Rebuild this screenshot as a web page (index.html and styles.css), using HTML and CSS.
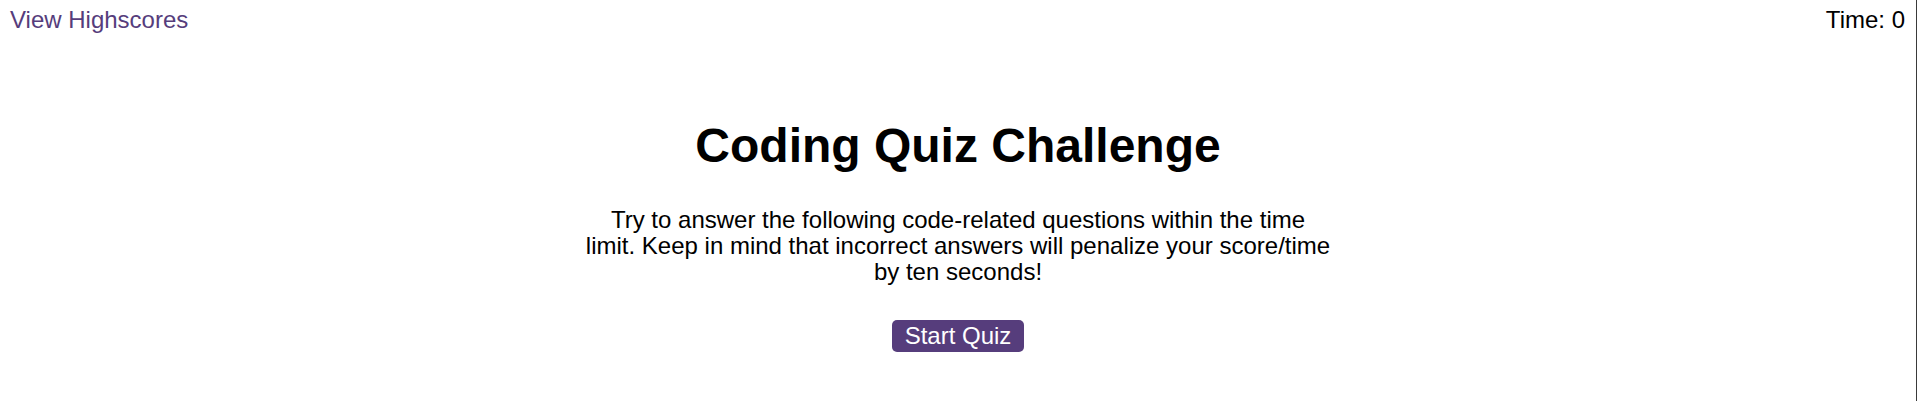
FILE: index.html
```html
<!DOCTYPE html>
<html lang="en">
<head>
<meta charset="utf-8">
<title>Coding Quiz Challenge</title>
<link rel="stylesheet" href="styles.css">
</head>
<body>
<div class="page">
  <header class="topbar">
    <a class="highscores" href="#">View Highscores</a>
    <div class="timer">Time: <span>0</span></div>
  </header>
  <main class="intro">
    <h1 class="title">Coding Quiz Challenge</h1>
    <p class="lead">Try to answer the following code-related questions within the time limit. Keep in mind that incorrect answers will penalize your score/time by ten seconds!</p>
    <button class="start" type="button">Start Quiz</button>
  </main>
</div>
</body>
</html>
```
FILE: styles.css
```css
html, body {
  margin: 0;
  padding: 0;
  background: #ffffff;
}

body {
  font-family: "Liberation Sans", Arial, sans-serif;
  color: #000000;
}

.page {
  min-height: 100vh;
  margin-right: 1px;
  border-right: 1px solid #3a3a3a;
  box-sizing: border-box;
}

.topbar {
  display: flex;
  justify-content: space-between;
  align-items: flex-start;
  padding: 6px 11px 0 10px;
  font-size: 24px;
  line-height: 27.6px;
}

.highscores {
  color: #563d7c;
  text-decoration: none;
}

.timer {
  color: #000000;
}

.intro {
  display: flex;
  flex-direction: column;
  align-items: center;
  text-align: center;
}

.title {
  margin: 84px 0 0 0;
  font-size: 48px;
  font-weight: bold;
  line-height: 55px;
}

.lead {
  width: 746px;
  margin: 34px 0 0 0;
  font-size: 24px;
  line-height: 26px;
}

.start {
  margin-top: 35px;
  padding: 2px 13px;
  border: none;
  border-radius: 5px;
  background: #563d7c;
  color: #ffffff;
  font-family: "Liberation Sans", Arial, sans-serif;
  font-size: 24px;
  line-height: 28px;
  cursor: pointer;
}
```
